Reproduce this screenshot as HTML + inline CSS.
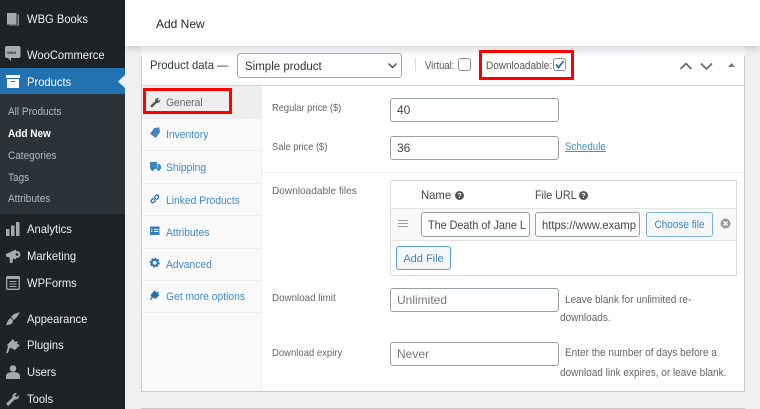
<!DOCTYPE html>
<html><head><meta charset="utf-8"><style>
html,body{margin:0;padding:0}
body{width:760px;height:409px;overflow:hidden;position:relative;background:#f0f0f1;font-family:"Liberation Sans",sans-serif;font-size:11px;color:#50575e}
.a{position:absolute;white-space:nowrap}
.x{transform-origin:0 0}
.m{position:absolute;left:27px;font-size:12px;transform:scaleX(.933);transform-origin:0 0;color:#eef0f1;white-space:nowrap;line-height:16px}
.s{position:absolute;left:8px;font-size:11px;transform:scaleX(.91);transform-origin:0 0;color:#b4b9be;line-height:14px;white-space:nowrap}
.t{position:absolute;left:166px;margin-top:1px;font-size:11px;transform:scaleX(.936);transform-origin:0 0;color:#3f8ac4;line-height:14px;white-space:nowrap}
.l{position:absolute;left:272px;font-size:10.500px;transform-origin:0 0;color:#666;line-height:14px;white-space:nowrap}
.h{position:absolute;font-size:11px;transform:scaleX(.91);transform-origin:0 0;color:#666;line-height:14px;white-space:nowrap}
.i{position:absolute;box-sizing:border-box;background:#fff;border:1px solid #9a9fa4;border-radius:3px;height:24px;font-size:12px;line-height:23px;padding-left:6px;color:#444;overflow:hidden;white-space:nowrap}
.i span,.b span{display:inline-block;transform-origin:0 50%}
.b span{transform-origin:50% 50%}
.sep{position:absolute;left:142px;width:120px;height:1px;background:#eee}
svg{position:absolute;overflow:visible}
</style></head><body>
<!-- sidebar -->
<div class="a" style="left:0;top:0;width:125px;height:409px;background:#1d2327"></div>
<div class="a" style="left:0;top:94px;width:125px;height:120px;background:#2c3338"></div>
<div class="a" style="left:0;top:68px;width:125px;height:26px;background:#2271b1"></div>
<svg style="left:118px;top:75px" width="7" height="13"><path d="M7 0 L0 6.500 L7 13Z" fill="#f0f0f1"/></svg>

<svg style="left:6px;top:12px" width="14" height="14"><path d="M1 1h9.500v11.500H1z" fill="#a7aaad"/><path d="M11.500 2.500h1.500v11H3v-.7h8.500z" fill="#8a8e92"/></svg>
<div class="m" style="top:11px">WBG Books</div>
<svg style="left:5px;top:46px" width="16" height="15"><rect x="0" y="0" width="15.500" height="12" rx="2" fill="#a7aaad"/><path d="M3 12l3 3v-3z" fill="#a7aaad"/><text x="2.300" y="8" font-size="4.500" font-family="Liberation Sans" font-weight="bold" fill="#1d2327">woo</text></svg>
<div class="m" style="top:47px">WooCommerce</div>
<svg style="left:6px;top:75px" width="14" height="13"><path d="M0 0h14v3H0zM1 4h12v9H1z" fill="#fff"/><path d="M5 6h4v1H5z" fill="#2271b1"/></svg>
<div class="m" style="top:74px;color:#fff">Products</div>
<div class="s" style="top:105px">All Products</div>
<div class="s" style="top:127px;color:#fff;font-weight:bold">Add New</div>
<div class="s" style="top:149px">Categories</div>
<div class="s" style="top:171px">Tags</div>
<div class="s" style="top:192px">Attributes</div>

<svg style="left:6px;top:222px" width="14" height="14"><path d="M0 7h3.500v7H0zM5 3.500h3.500V14H5zM10 0h3.500v14H10z" fill="#a7aaad"/></svg>
<div class="m" style="top:221px">Analytics</div>
<svg style="left:5px;top:248px" width="16" height="16"><path d="M1 6L11 1.500V11.500L8 10.500 7.500 15H5l-.5-5.500L1 8.500z" fill="#a7aaad"/><circle cx="12" cy="6.500" r="3.500" fill="#a7aaad"/><circle cx="12" cy="6.500" r="1.300" fill="#1d2327"/></svg>
<div class="m" style="top:248px">Marketing</div>
<svg style="left:6px;top:276px" width="14" height="14"><rect x=".7" y=".7" width="12.600" height="12.600" rx="1" fill="none" stroke="#a7aaad" stroke-width="1.300"/><path d="M1 1h12v2H1zM3.500 5h7v1h-7zM3.500 7.500h7v1h-7zM3.500 10h7v1h-7z" fill="#a7aaad"/></svg>
<div class="m" style="top:275px">WPForms</div>
<svg style="left:5px;top:311px" width="16" height="15"><path d="M15 1L9 3 6 6l3 3 3-3zM5.500 7L3 9.500 1 14c3 0 5-.5 6.500-2L8 9z" fill="#a7aaad"/></svg>
<div class="m" style="top:311px">Appearance</div>
<svg style="left:6px;top:339px" width="14" height="14"><path d="M7 0l2 3 3-1-1 3 3 1-5 5-5-2.500-2 5.500H0l2-6.500L1 6z" fill="#a7aaad"/></svg>
<div class="m" style="top:337px">Plugins</div>
<svg style="left:6px;top:365px" width="14" height="14"><circle cx="7" cy="3.500" r="3.300" fill="#a7aaad"/><path d="M0 14v-3c0-2.500 3-4 7-4s7 1.500 7 4v3z" fill="#a7aaad"/></svg>
<div class="m" style="top:364px">Users</div>
<svg style="left:6px;top:392px" width="14" height="14"><path d="M1 13c-.8-.8-.8-1.500 0-2.300L6.500 5.500C6 3 8 .5 11 1L8.800 3.500 10.500 5.200 13 3c.5 3-2 5-4.500 4.500L3.300 13C2.500 13.800 1.800 13.800 1 13z" fill="#a7aaad"/></svg>
<div class="m" style="top:391px">Tools</div>

<!-- top bar -->
<div class="a" style="left:125px;top:0;width:635px;height:46px;background:#fff;box-shadow:0 2px 8px rgba(0,0,0,.18)"></div>
<div class="a" style="left:156px;top:16px;font-size:12px;color:#23282d;line-height:16px">Add New</div>

<!-- panel -->
<div class="a" style="left:141px;top:47px;width:604px;height:345px;background:#fff;border:1px solid #c9cbce;border-top:0;box-sizing:border-box"></div>
<div class="a" style="left:141px;top:46px;width:604px;height:10px;background:linear-gradient(#dcdde0,#fff)"></div>
<div class="a" style="left:142px;top:85px;width:602px;height:1px;background:#d5d6d8"></div>
<div class="a" style="left:142px;top:86px;width:120px;height:305px;background:#fafafa;border-right:1px solid #eee;box-sizing:border-box"></div>
<div class="a" style="left:142px;top:86px;width:120px;height:33px;background:#eee"></div>
<div class="sep" style="top:150px"></div><div class="sep" style="top:183px"></div><div class="sep" style="top:215px"></div><div class="sep" style="top:248px"></div><div class="sep" style="top:280px"></div><div class="sep" style="top:312px"></div>
<div class="a" style="left:262px;top:172px;width:482px;height:1px;background:#eee"></div>
<div class="a" style="left:141px;top:408px;width:604px;height:1px;background:#c9cbce"></div>

<div class="a x" style="left:150px;top:58px;font-size:12px;transform:scaleX(.94);color:#32373c;line-height:14px">Product data —</div>
<div class="a" style="left:237px;top:53px;width:165px;height:25px;box-sizing:border-box;background:#fff;border:1px solid #a5a8ab;border-radius:3px"></div>
<div class="a x" style="left:245px;top:54px;font-size:12.300px;transform:scaleX(.935);color:#333;line-height:25px">Simple product</div>
<svg style="left:387px;top:62px" width="12" height="8"><path d="M1.500 1.500L5.500 5.500 9.500 1.500" fill="none" stroke="#444" stroke-width="1.300"/></svg>
<div class="a" style="left:415px;top:58px;width:1px;height:13px;background:#ddd"></div>
<div class="a x" style="left:425px;top:59px;font-size:10.800px;transform:scaleX(.88);color:#555;line-height:14px">Virtual:</div>
<div class="a" style="left:458px;top:58px;width:13px;height:13px;box-sizing:border-box;background:#fff;border:1px solid #8c8f94;border-radius:3px"></div>
<div class="a" style="left:479px;top:50px;width:95px;height:30px;box-sizing:border-box;border:3px solid #f00"></div>
<div class="a x" style="left:486px;top:59px;font-size:10.800px;transform:scaleX(.926);color:#555;line-height:14px">Downloadable:</div>
<div class="a" style="left:553px;top:58px;width:13px;height:13px;box-sizing:border-box;background:#fff;border:1px solid #8c8f94;border-radius:3px"></div>
<svg style="left:553px;top:58px" width="13" height="13"><path d="M3 6.500L5.500 9.500 10.500 3" fill="none" stroke="#2271b1" stroke-width="1.800"/></svg>
<svg style="left:680px;top:61px" width="60" height="10"><path d="M.5 8L6 2.500 11.500 8" fill="none" stroke="#666" stroke-width="1.600"/><path d="M21 2.500L26.500 8 32 2.500" fill="none" stroke="#666" stroke-width="1.600"/><path d="M48 6L51.500 2 55 6z" fill="#777"/></svg>

<!-- tabs -->
<div class="a" style="left:143px;top:88px;width:89px;height:26px;box-sizing:border-box;border:3px solid #f00"></div>
<svg style="left:150px;top:97px" width="11" height="11"><path d="M.8 9.700c-.5-.5-.5-1 0-1.500L5 4.500C4.700 2.500 6.500.5 9 1L7.500 2.700 8.700 3.900 10.300 2.300C10.700 4.500 9 6.300 6.800 6L2.500 10.100C1.900 10.500 1.300 10.300.8 9.700z" fill="#555"/></svg>
<div class="t" style="top:95px;color:#666">General</div>
<svg style="left:150px;top:128px" width="11" height="11"><path d="M0 5L5 0h5v5l-5 5z" fill="#2271b1" opacity=".85" transform="rotate(-8 5 5)"/></svg>
<div class="t" style="top:127px">Inventory</div>
<svg style="left:150px;top:161px" width="11" height="11"><path d="M0 1h7v7H0zM7.500 3h2L11 5v3H7.500z" fill="#2271b1" opacity=".85"/><circle cx="2.500" cy="8.500" r="1.300" fill="#2271b1"/><circle cx="8.500" cy="8.500" r="1.300" fill="#2271b1"/></svg>
<div class="t" style="top:160px">Shipping</div>
<svg style="left:150px;top:194px" width="10" height="10"><path d="M4 6L6 4M3.500 4L1.500 6a1.500 1.500 0 0 0 2.300 2.300L5.800 6.500M4 3.500L6 1.500A1.500 1.500 0 0 1 8.300 3.800L6.500 5.800" fill="none" stroke="#2271b1" stroke-width="1.300"/></svg>
<div class="t" style="top:193px">Linked Products</div>
<svg style="left:150px;top:226px" width="10" height="10"><path d="M0 .5h9.500v8.500H0z" fill="#2271b1" opacity=".9"/><path d="M1 3h1.500v1H1zM4 3h4.500v1H4zM1 5h1.500v1H1zM4 5h4.500v1H4z" fill="#fff"/></svg>
<div class="t" style="top:225px">Attributes</div>
<svg style="left:150px;top:258px" width="10" height="10"><circle cx="4.700" cy="4.700" r="3" fill="none" stroke="#2271b1" stroke-width="2"/><circle cx="4.700" cy="4.700" r="4.500" fill="none" stroke="#2271b1" stroke-width="1.200" stroke-dasharray="1.800 1.700"/></svg>
<div class="t" style="top:257px">Advanced</div>
<svg style="left:150px;top:290px" width="10" height="11"><path d="M5 0l1 2.500L9 1.500 8 4l1.500 1-4 4L3 7.500 1 10H0l1.500-3.500L.5 5z" fill="#2271b1"/></svg>
<div class="t" style="top:289px">Get more options</div>

<!-- fields -->
<div class="l" style="top:101px;transform:scaleX(.886)">Regular price ($)</div>
<div class="i" style="left:390px;top:98px;width:169px">40</div>
<div class="l" style="top:140px;transform:scaleX(.886)">Sale price ($)</div>
<div class="i" style="left:390px;top:136px;width:169px">36</div>
<div class="a x" style="left:565px;top:140px;font-size:10.800px;transform:scaleX(.907);color:#4a8fc7;text-decoration:underline;line-height:14px">Schedule</div>

<div class="l" style="top:184px;transform:scaleX(.962)">Downloadable files</div>
<div class="a" style="left:390px;top:180px;width:347px;height:96px;box-sizing:border-box;background:#fff;border:1px solid #dcdcde"></div>
<div class="a" style="left:391px;top:208px;width:345px;height:1px;background:#e3e3e3"></div>
<div class="a" style="left:391px;top:209px;width:345px;height:31px;background:#f9f9f9"></div>
<div class="a" style="left:391px;top:240px;width:345px;height:1px;background:#e3e3e3"></div>
<div class="a x" style="left:421px;top:188px;font-size:12px;transform:scaleX(.94);color:#444;line-height:14px">Name</div>
<div class="a x" style="left:535px;top:188px;font-size:12px;transform:scaleX(.89);color:#444;line-height:14px">File URL</div>
<svg style="left:455px;top:191px" width="9" height="9"><circle cx="4.500" cy="4.500" r="4.500" fill="#555"/><text x="4.500" y="7" font-size="7" font-weight="bold" text-anchor="middle" fill="#fff" font-family="Liberation Sans">?</text></svg>
<svg style="left:579px;top:191px" width="9" height="9"><circle cx="4.500" cy="4.500" r="4.500" fill="#555"/><text x="4.500" y="7" font-size="7" font-weight="bold" text-anchor="middle" fill="#fff" font-family="Liberation Sans">?</text></svg>
<svg style="left:398px;top:220px" width="10" height="8"><path d="M0 .5h10M0 3.500h10M0 6.500h10" stroke="#999" stroke-width="1.100"/></svg>
<div class="i" style="left:421px;top:212px;width:109px;height:25px;line-height:24px"><span style="transform:scaleX(.9)">The Death of Jane L</span></div>
<div class="i" style="left:535px;top:212px;width:105px;height:25px;line-height:24px"><span style="transform:scaleX(.933)">https://www.examp</span></div>
<div class="a b" style="left:646px;top:212px;width:67px;height:25px;box-sizing:border-box;background:#f6f7f7;border:1px solid #7fb0d6;border-radius:3px;text-align:center;line-height:24px;color:#3f86bd;font-size:11px"><span style="transform:scaleX(.91)">Choose file</span></div>
<svg style="left:720px;top:218px" width="11" height="11"><circle cx="5.500" cy="5.500" r="5" fill="#999"/><path d="M3.500 3.500l4 4M7.500 3.500l-4 4" stroke="#fff" stroke-width="1.400"/></svg>
<div class="a" style="left:396px;top:246px;width:55px;height:24px;box-sizing:border-box;background:#f6f7f7;border:1px solid #5a9fd0;border-radius:3px;text-align:center;line-height:24px;color:#3f86bd;font-size:11px">Add File</div>

<div class="l" style="top:291px;transform:scaleX(.933)">Download limit</div>
<div class="i" style="left:390px;top:288px;width:169px;color:#777">Unlimited</div>
<div class="h" style="left:565px;top:293px">Leave blank for unlimited re-</div>
<div class="h" style="left:560px;top:311px">downloads.</div>
<div class="l" style="top:346px;transform:scaleX(.905)">Download expiry</div>
<div class="i" style="left:390px;top:342px;width:169px;color:#777">Never</div>
<div class="h" style="left:565px;top:346px">Enter the number of days before a</div>
<div class="h" style="left:560px;top:366px">download link expires, or leave blank.</div>
</body></html>
